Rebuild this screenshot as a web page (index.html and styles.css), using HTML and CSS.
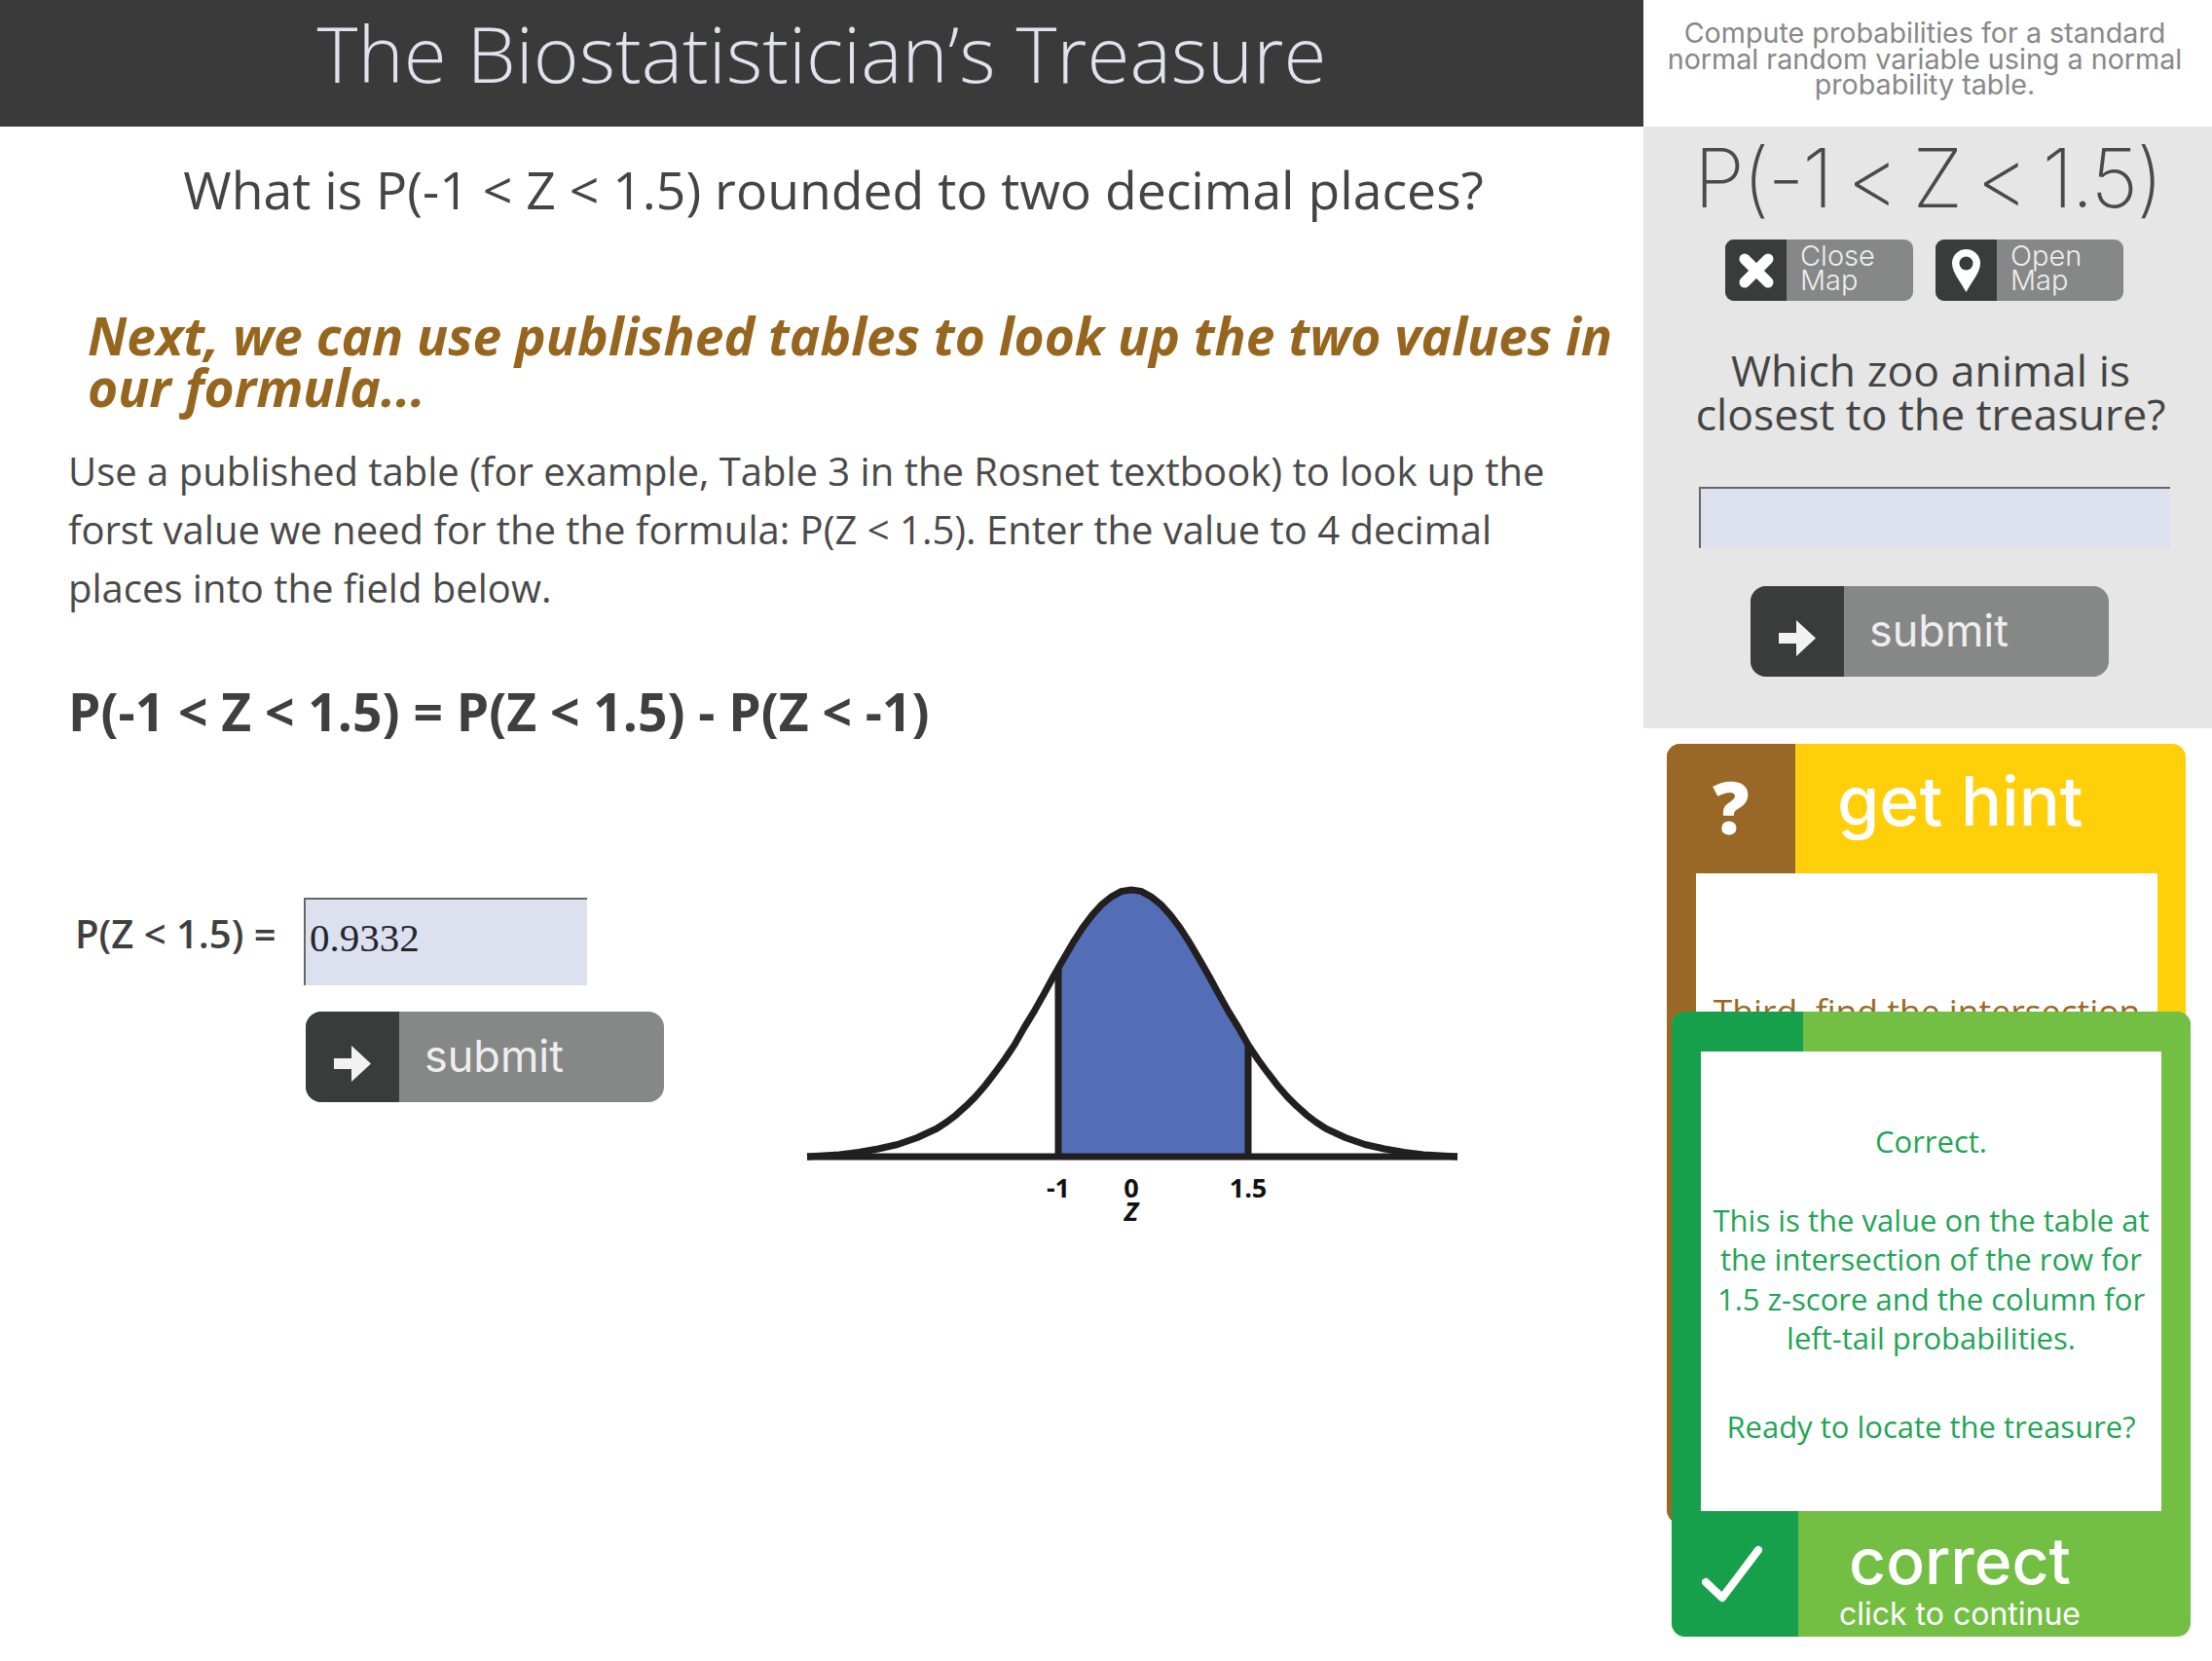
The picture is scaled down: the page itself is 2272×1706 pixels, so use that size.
FILE: index.html
```html
<!DOCTYPE html>
<html>
<head>
<title>The Biostatistician's Treasure</title>
<link rel="stylesheet" href="styles.css">
</head>
<body>
<div class="page">

<!-- lesson column -->
<div class="main">
  <div class="banner">The Biostatistician’s Treasure</div>
  <div class="question">What is P(-1 &lt; Z &lt; 1.5) rounded to two decimal places?</div>
  <div class="lead">Next, we can use published tables to look up the two values in<br>our formula...</div>
  <div class="para">Use a published table (for example, Table 3 in the Rosnet textbook) to look up the<br>forst value we need for the the formula: P(Z &lt; 1.5). Enter the value to 4 decimal<br>places into the field below.</div>
  <div class="formula">P(-1 &lt; Z &lt; 1.5) = P(Z &lt; 1.5) - P(Z &lt; -1)</div>

  <div class="work">
    <div class="answer">
      <div class="answer-row">
        <span class="answer-label">P(Z &lt; 1.5) =</span>
        <div class="field field-small">0.9332</div>
      </div>
      <div class="btn btn-answer">
        <span class="btn-icon">
          <svg class="arrow" viewBox="0 0 38 37"><path d="M0 13h18V0l20 18.5L18 37V24H0z"/></svg>
        </span>
        <span class="btn-text">submit</span>
      </div>
    </div>

    <svg class="curve" viewBox="0 0 668 340">
      <path class="area" d="M258 90L263 81.500L273 64.400L283 48.900L293 35.600L303 24.700L313 16.800L323 11.400L333 10L343 11.400L353 16.800L363 24.700L373 35.600L383 48.900L393 64.400L403 81.500L413 99L423 117.400L433 135.100L443 151.400L453 169.100V284H258z"/>
      <polyline class="line" points="0,284 33,282 53,279.500 73,276 93,271.500 113,264.500 133,255.300 143,248.800 153,241.200 163,232.200 173,222.200 183,210.700 193,197.700 203,184 213,169.100 223,151.400 233,135.100 243,117.400 253,99 263,81.500 273,64.400 283,48.900 293,35.600 303,24.700 313,16.800 323,11.400 333,10 343,11.400 353,16.800 363,24.700 373,35.600 383,48.900 393,64.400 403,81.500 413,99 423,117.400 433,135.100 443,151.400 453,169.100 463,184 473,197.700 483,210.700 493,222.200 503,232.200 513,241.200 523,248.800 533,255.300 553,264.500 573,271.500 593,276 613,279.500 633,282 668,284"/>
      <line class="line" x1="0" y1="284" x2="668" y2="284"/>
      <line class="line" x1="258" y1="90" x2="258" y2="284"/>
      <line class="line" x1="453" y1="169" x2="453" y2="284"/>
      <text class="tick" x="258" y="326">-1</text>
      <text class="tick" x="333" y="326">0</text>
      <text class="tick" x="453" y="326">1.5</text>
      <text class="tick tick-z" x="333" y="350">Z</text>
    </svg>
  </div>
</div>

<!-- game column -->
<div class="side">
  <div class="objective">Compute probabilities for a standard<br>normal random variable using a normal<br>probability table.</div>

  <div class="panel">
    <div class="prob">P(-1 &lt; Z &lt; 1.5)</div>
    <div class="map-btns">
      <div class="btn btn-map">
        <span class="btn-icon">
          <svg class="icon-x" viewBox="0 0 38 38"><path d="M7 7L31 31M31 7L7 31"/></svg>
        </span>
        <span class="btn-text">Close<br>Map</span>
      </div>
      <div class="btn btn-map">
        <span class="btn-icon">
          <svg class="icon-pin" viewBox="0 0 29 44"><path fill-rule="evenodd" d="M14.5 0C6.5 0 0 6.400 0 14.400C0 24 10 35 14.5 44C19 35 29 24 29 14.400C29 6.400 22.500 0 14.5 0zM14.5 7.500a7 7 0 1 1 0 14a7 7 0 1 1 0-14z"/></svg>
        </span>
        <span class="btn-text">Open<br>Map</span>
      </div>
    </div>
    <div class="riddle">Which zoo animal is<br>closest to the treasure?</div>
    <div class="field field-wide"></div>
    <div class="btn btn-guess">
      <span class="btn-icon">
        <svg class="arrow" viewBox="0 0 38 37"><path d="M0 13h18V0l20 18.5L18 37V24H0z"/></svg>
      </span>
      <span class="btn-text">submit</span>
    </div>
  </div>

  <div class="cards">
    <div class="card hint">
      <div class="card-top">
        <span class="tab">?</span>
        <span class="card-title">get hint</span>
      </div>
      <div class="card-body">
        <div class="hint-text">Third, find the intersection</div>
      </div>
    </div>

    <div class="card correct">
      <div class="card-strip"><span class="tab"></span></div>
      <div class="card-body">
        <p>Correct.</p>
        <p>This is the value on the table at<br>the intersection of the row for<br>1.5 z-score and the column for<br>left-tail probabilities.</p>
        <p class="ready">Ready to locate the treasure?</p>
      </div>
      <div class="card-foot">
        <span class="tab">
          <svg class="check" viewBox="0 0 62 60"><path d="M4 38L21 54L58 5"/></svg>
        </span>
        <span class="foot-text">
          <span class="foot-big">correct</span>
          <span class="foot-small">click to continue</span>
        </span>
      </div>
    </div>
  </div>
</div>

</div>
</body>
</html>
```

FILE: styles.css
```css
html, body { margin: 0; padding: 0; background: #fff; overflow: hidden; }
body { font-family: "Open Sans", "Liberation Sans", sans-serif; color: #444; }
.page { display: grid; grid-template-columns: 1688px 584px; width: 2272px; height: 1706px; overflow: hidden; }

/* lesson column */
.banner { height: 130px; line-height: 108px; background: #3a3a3a; color: #dfe3ee; font-size: 80px; font-weight: 300; text-align: center; }
.question { margin-top: 30px; padding-left: 24px; line-height: 70px; font-size: 53.5px; text-align: center; color: #444; }
.lead { margin: 88px 0 0 90px; line-height: 53px; font-size: 53.3px; font-weight: 700; font-style: italic; color: #96661f; white-space: nowrap; }
.para { margin: 30px 0 0 70px; line-height: 60px; font-size: 40px; color: #4a4a4a; white-space: nowrap; }
.formula { margin: 67px 0 0 70px; line-height: 60px; font-size: 53.3px; font-weight: 700; color: #3f3f3f; white-space: nowrap; }

.work { display: flex; margin-top: 143px; }
.answer { width: 675px; margin: 0 77px 0 77px; padding-top: 18px; }
.answer-row { display: flex; align-items: flex-start; }
.answer-label { width: 235px; margin-top: 10px; line-height: 54px; font-size: 40px; font-weight: 600; color: #3f3f3f; white-space: nowrap; }
.field { box-sizing: border-box; background: #dde0ef; border-top: 2px solid #666; border-left: 2px solid #666; }
.field-small { width: 291px; height: 90px; padding: 10px 0 0 4px; font-family: "Liberation Serif", serif; font-size: 41px; line-height: 58px; color: #23262e; }
.field-wide { width: 484px; height: 63px; margin: 53px 0 0 57px; }
.curve { display: block; width: 668px; height: 340px; overflow: visible; }
.area { fill: #536eb6; }
.line { fill: none; stroke: #231f20; stroke-width: 7; stroke-linejoin: round; }
.tick { font-family: "Open Sans", sans-serif; font-size: 27px; font-weight: 700; text-anchor: middle; fill: #111; }
.tick-z { font-style: italic; }

/* buttons */
.btn { display: flex; box-sizing: border-box; overflow: hidden; background: #868887; color: #eee; font-family: Inter, "Liberation Sans", sans-serif; border-radius: 16px; }
.btn-icon { display: flex; flex: none; align-items: center; justify-content: center; background: #3a3c3b; }
.btn-answer, .btn-guess { width: 368px; height: 93px; }
.btn-answer { margin: 27px 0 0 237px; }
.btn-guess { margin: 39px 0 0 110px; }
.btn-answer .btn-icon, .btn-guess .btn-icon { width: 96px; padding-top: 14px; box-sizing: border-box; }
.btn-answer .btn-text, .btn-guess .btn-text { padding-left: 26px; line-height: 92px; font-size: 45px; font-weight: 400; }
.arrow { width: 38px; height: 37px; fill: #f2f2f2; }
.btn-map { width: 193px; height: 63px; border-radius: 9px; }
.btn-map .btn-icon { width: 63px; }
.btn-map .btn-text { padding: 4px 0 0 14px; line-height: 25px; font-size: 29px; font-weight: 300; }
.icon-x { width: 38px; height: 38px; fill: none; stroke: #fff; stroke-width: 11; stroke-linecap: round; }
.icon-pin { width: 29px; height: 44px; fill: #fff; }

/* game column */
.objective { height: 130px; padding: 21px 6px 0 0; box-sizing: border-box; line-height: 26.5px; font-family: Inter, "Liberation Sans", sans-serif; font-size: 28.7px; color: #888; text-align: center; white-space: nowrap; }
.panel { height: 618px; padding-top: 1px; box-sizing: border-box; background: #e6e6e6; }
.prob { height: 96px; overflow: hidden; line-height: 104px; font-family: Inter, "Liberation Sans", sans-serif; font-size: 84px; font-weight: 200; letter-spacing: -2px; word-spacing: -6px; color: #4a4a4a; text-align: center; white-space: nowrap; }
.map-btns { display: flex; gap: 23px; margin: 19px 0 0 84px; }
.riddle { margin-top: 48px; padding-left: 6px; line-height: 45px; font-size: 44.5px; color: #444; text-align: center; white-space: nowrap; }

.cards { position: relative; box-sizing: border-box; height: 958px; padding-top: 16px; }
.card { box-sizing: border-box; border-radius: 14px; overflow: hidden; }
.hint { position: relative; width: 533px; height: 801px; margin-left: 24px; background: linear-gradient(to right, #996826 30px, #ffcf0a 30px); }
.card-top { display: flex; height: 133px; }
.hint .tab { width: 132px; background: #996826; color: #fff; font-size: 74px; font-weight: 800; line-height: 130px; text-align: center; }
.card-title { padding-left: 43px; font-family: Inter, "Liberation Sans", sans-serif; font-size: 70px; font-weight: 500; color: #fff; line-height: 118px; }
.card-body { background: #fff; text-align: center; }
.hint .card-body { height: 668px; margin: 0 29px 0 30px; }
.hint-text { padding-top: 121px; line-height: 40px; font-size: 35.5px; color: #996826; white-space: nowrap; }

.correct { position: absolute; left: 29px; top: 291px; width: 533px; height: 642px; background: #72bf44; }
.card-strip { height: 41px; background: #72bf44; }
.card-strip .tab { display: block; width: 135px; height: 41px; background: #17a04b; }
.correct .card-body { box-sizing: border-box; height: 472px; margin: 0 30px; padding-top: 72px; box-shadow: -30px 0 0 #17a04b; font-size: 31px; line-height: 40.5px; color: #1fa555; white-space: nowrap; }
.correct p { margin: 0 0 40px; }
.correct .ready { margin-top: 50px; }
.card-foot { display: flex; height: 129px; }
.card-foot .tab { display: flex; width: 130px; background: #17a04b; align-items: center; justify-content: center; padding-right: 6px; box-sizing: border-box; }
.check { width: 62px; height: 60px; fill: none; stroke: #fff; stroke-width: 8; stroke-linecap: round; stroke-linejoin: round; }
.foot-text { display: flex; flex-direction: column; align-items: center; width: 324px; margin-left: 4px; font-family: Inter, "Liberation Sans", sans-serif; color: #fff; }
.foot-big { font-size: 66px; font-weight: 500; line-height: 70px; margin-top: 16px; }
.foot-small { font-size: 32px; line-height: 36px; margin-top: 2px; }
```
